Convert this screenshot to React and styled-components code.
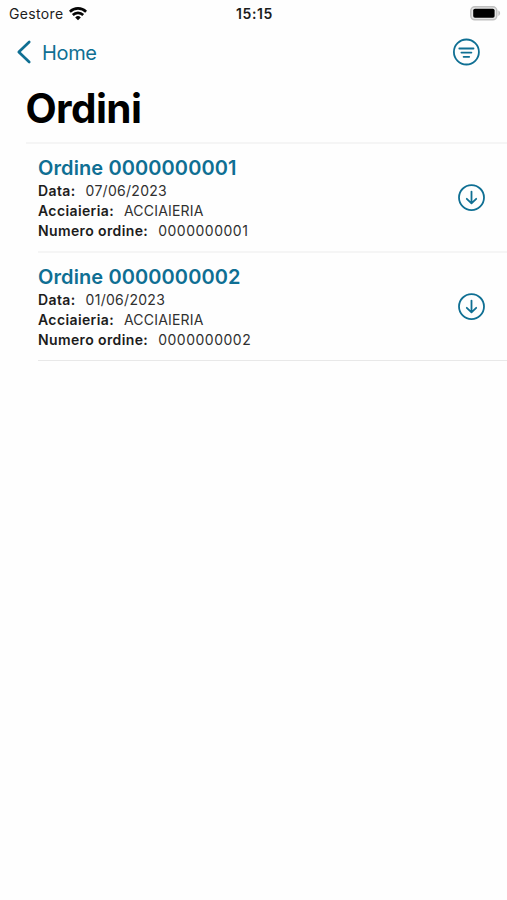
import React from 'react';
import styled, { createGlobalStyle } from 'styled-components';

const GlobalStyle = createGlobalStyle`
  * { box-sizing: border-box; }
  body { margin: 0; background: #fefefe; }
`;

const ACCENT = '#0f6f93';

const Screen = styled.main`
  min-height: 900px;
  background: #fefefe;
  color: #1c1c1c;
  font-family: Inter, Roboto, sans-serif;
  overflow: hidden;
`;

const StatusBar = styled.div`
  display: grid;
  grid-template-columns: 1fr auto 1fr;
  align-items: center;
  height: 27px;
  padding: 0 6px 0 9px;
  font-size: 14px;
  line-height: 27px;
`;

const Carrier = styled.div`
  display: flex;
  align-items: center;
  gap: 5px;
  letter-spacing: 0.35px;
`;

const Clock = styled.div`
  margin-right: 1px;
  font-weight: 600;
  letter-spacing: 0.6px;
`;

const BatterySlot = styled.div`
  display: flex;
  justify-content: flex-end;
`;

const NavBar = styled.nav`
  display: flex;
  align-items: center;
  justify-content: space-between;
  height: 50px;
  padding: 0 27px 0 16px;
`;

const BackLink = styled.a`
  display: flex;
  align-items: center;
  gap: 10px;
  color: ${ACCENT};
  font-size: 20px;
  line-height: 24px;
  letter-spacing: -0.35px;
`;

const BackLabel = styled.span`
  padding-top: 2px;
`;

const IconButton = styled.button`
  display: flex;
  padding: 0;
  border: 0;
  background: none;
  color: ${ACCENT};
`;

const Title = styled.h1`
  height: 65px;
  margin: 0;
  padding: 7px 0 0 25.5px;
  color: #000;
  font-size: 40.5px;
  font-weight: 700;
  line-height: 50px;
  letter-spacing: -0.6px;
`;

const OrderList = styled.ul`
  margin: 0 0 0 26px;
  padding: 0 0 0 12px;
  border-top: 2px solid #f5f5f5;
  list-style: none;
`;

const OrderRow = styled.li`
  display: flex;
  align-items: center;
  justify-content: space-between;
  height: ${({ $last }) => ($last ? '108px' : '109px')};
  padding-right: 22px;
  border-bottom: ${({ $last }) => ($last ? '1px solid #e8e8e8' : '2px solid #f5f5f5')};
`;

const OrderName = styled.h2`
  margin: 0;
  color: ${ACCENT};
  font-size: 20px;
  font-weight: 600;
  line-height: 26px;
  letter-spacing: 0.1px;
`;

const Detail = styled.div`
  display: flex;
  gap: 10px;
  font-size: 14px;
  line-height: 20px;
`;

const Label = styled.span`
  font-weight: 600;
  letter-spacing: 0.38px;
`;

const Value = styled.span`
  color: #303030;
  letter-spacing: ${({ $tracking }) => $tracking}px;
`;

const Wifi = () => (
  <svg width="18" height="14" viewBox="0 0 18 14" fill="none" stroke="#050505" strokeWidth="2.6">
    <path d="M.9 4.7a11.6 11.6 0 0 1 16.2 0M3.8 8a7.4 7.4 0 0 1 10.4 0" />
    <path d="M9 13.2 6.2 10.4a4 4 0 0 1 5.6 0Z" fill="#050505" stroke="none" />
  </svg>
);

const Battery = () => (
  <svg width="31" height="15" viewBox="0 0 31 15">
    <rect x=".8" y=".8" width="26" height="13" rx="4" fill="#e6e6e6" stroke="#c0c0c0" strokeWidth="1.5" />
    <rect x="3.2" y="2.8" width="21.4" height="9" rx="1.8" fill="#000" />
    <path d="M28.3 4.6c2.4.8 2.4 4.6 0 5.4Z" fill="#c0c0c0" />
  </svg>
);

const Chevron = () => (
  <svg width="16" height="24" viewBox="0 0 16 24" fill="none" stroke="currentColor" strokeWidth="2.7" strokeLinecap="round" strokeLinejoin="round">
    <path d="M13.2 2 2.8 12l10.4 10" />
  </svg>
);

const FilterIcon = () => (
  <svg width="28" height="28" viewBox="-.4 0 28 28" fill="none" stroke="currentColor" strokeWidth="1.8" strokeLinecap="round">
    <circle cx="14" cy="14" r="12.5" />
    <path d="M6.9 10.5h14.2M9 14.6h10M11.2 18.8h5.6" />
  </svg>
);

const DownloadIcon = () => (
  <svg width="28" height="28" viewBox="-.5 .4 28 28" fill="none" stroke="currentColor" strokeWidth="1.8" strokeLinecap="round" strokeLinejoin="round">
    <circle cx="14" cy="14" r="12.5" />
    <path d="M14 8v11.6M9.3 15.2l4.7 4.5 4.7-4.5" />
  </svg>
);

const orders = [
  { number: '0000000001', date: '07/06/2023', mill: 'ACCIAIERIA' },
  { number: '0000000002', date: '01/06/2023', mill: 'ACCIAIERIA' },
];

export default function App() {
  return (
    <Screen>
      <GlobalStyle />
      <StatusBar>
        <Carrier>Gestore<Wifi /></Carrier>
        <Clock>15:15</Clock>
        <BatterySlot><Battery /></BatterySlot>
      </StatusBar>
      <NavBar>
        <BackLink><Chevron /><BackLabel>Home</BackLabel></BackLink>
        <IconButton aria-label="Filtra"><FilterIcon /></IconButton>
      </NavBar>
      <Title>Ordini</Title>
      <OrderList>
        {orders.map((order, i) => (
          <OrderRow key={order.number} $last={i === orders.length - 1}>
            <div>
              <OrderName>Ordine {order.number}</OrderName>
              <Detail><Label>Data:</Label><Value $tracking={0.28}>{order.date}</Value></Detail>
              <Detail><Label>Acciaieria:</Label><Value $tracking={0.2}>{order.mill}</Value></Detail>
              <Detail><Label>Numero ordine:</Label><Value $tracking={0.5}>{order.number}</Value></Detail>
            </div>
            <IconButton aria-label="Scarica"><DownloadIcon /></IconButton>
          </OrderRow>
        ))}
      </OrderList>
    </Screen>
  );
}
